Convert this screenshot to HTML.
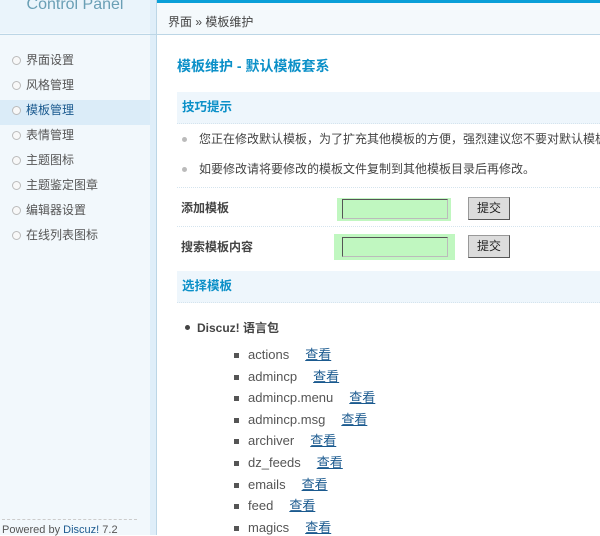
<!DOCTYPE html>
<html><head><meta charset="utf-8"><style>
*{margin:0;padding:0;box-sizing:border-box}
body{width:600px;height:535px;overflow:hidden;background:#fff;font-family:"Liberation Sans","Noto Sans CJK SC",sans-serif;font-size:12px;color:#555;position:relative}
#side{position:absolute;left:0;top:0;width:150px;height:535px;background:#f2f8fc}
#logo{position:absolute;left:0;top:0;width:150px;height:33px;background:#eaf4fb;color:#6a9fb5;font-size:16px;text-align:center;line-height:10px}
#strip{position:absolute;left:150px;top:0;width:6px;height:535px;background:#dfeef9}
#vline{position:absolute;left:156px;top:0;width:1px;height:535px;background:#bcd6e6}
#hline{position:absolute;left:0;top:34px;width:600px;height:1px;background:#bcd6e6}
#top{position:absolute;left:157px;top:0;width:443px;height:3px;background:#0a9fd8}
#crumb{position:absolute;left:157px;top:3px;width:443px;height:31px;background:#f4f9fc;padding:10px 0 0 11px;color:#444}
#menu{position:absolute;left:0;top:50px;width:150px;list-style:none}
#menu li{height:25px;line-height:21px;padding-left:26px;position:relative;font-size:12px;color:#555}
#menu li:before{content:"";position:absolute;left:12px;top:6px;width:7px;height:7px;border-radius:50%;border:1px solid #bbb;background:#f8f8f8}
#menu li.on{background:#dbecf8;color:#1b5a8f}
#pw{position:absolute;left:2px;top:519px;font-size:11px;color:#555;border-top:1px dashed #ccc;width:135px;padding-top:4px}
#pw a{color:#1b5a8f;text-decoration:none}
#main{position:absolute;left:177px;top:35px;width:423px;height:500px;overflow:hidden}
h1{font-size:14px;color:#0b90c8;margin-top:21px;height:36px}
.hd{background:#eef6fc;height:32px;line-height:30px;padding-left:5px;color:#0b90c8;font-weight:bold;font-size:12.5px;border-bottom:1px dotted #d5e4ee}
.tip{height:30px;line-height:28px;padding-left:22px;position:relative;white-space:nowrap;color:#444}
.tip:before{content:"";position:absolute;left:5px;top:12px;width:5px;height:5px;border-radius:50%;background:#bbb}
.row{height:39px;border-top:1px dotted #d5e4ee;position:relative;font-weight:bold;color:#444;line-height:40px;padding-left:4px}
.inp{position:absolute;background:#c0f7c0}
.inp div{position:absolute;width:106px;height:20px;border:1px solid #555;border-right-color:#bbb;border-bottom-color:#bbb;background:#c0f7c0}
.btn{position:absolute;left:291px;width:42px;height:23px;background:#dcdcdc;border:1px solid #999;border-right-color:#555;border-bottom-color:#555;font-weight:normal;color:#222;line-height:21px;text-align:center}
ul.l1{list-style:none;margin-top:16px}
.l1>li{padding-left:20px;position:relative;font-weight:bold;color:#444;height:28px}
.l1>li:before{content:"";position:absolute;left:8px;top:6px;width:5px;height:5px;border-radius:50%;background:#444}
.l2{list-style:none;padding-left:52px;margin-top:-1px}
.l2 li{height:21.6px;line-height:18px;position:relative;padding-left:19px;font-size:13px;color:#555}
.l2 li:before{content:"";position:absolute;left:5px;top:7px;width:5px;height:5px;background:#555}
.l2 a{color:#1b5a8f;text-decoration:underline;margin-left:16px}
</style></head><body>
<div id="side"></div>
<div id="logo">Control Panel</div>
<div id="strip"></div><div id="vline"></div>
<div id="top"></div>
<div id="crumb">界面 » 模板维护</div>
<div id="hline"></div>
<ul id="menu">
<li>界面设置</li><li>风格管理</li><li class="on">模板管理</li><li>表情管理</li><li>主题图标</li><li>主题鉴定图章</li><li>编辑器设置</li><li>在线列表图标</li>
</ul>
<div id="pw">Powered by <a>Discuz!</a> 7.2</div>
<div id="main">
<h1>模板维护 - 默认模板套系</h1>
<div class="hd">技巧提示</div>
<div class="tip" style="margin-top:1px">您正在修改默认模板，为了扩充其他模板的方便，强烈建议您不要对默认模板进行修改</div>
<div class="tip" style="margin-bottom:2px">如要修改请将要修改的模板文件复制到其他模板目录后再修改。</div>
<div class="row">添加模板<div class="inp" style="left:160px;top:10px;width:114px;height:23px"><div style="left:5px;top:1px"></div></div><div class="btn" style="top:9px">提交</div></div>
<div class="row">搜索模板内容<div class="inp" style="left:157px;top:7px;width:121px;height:26px"><div style="left:8px;top:3px"></div></div><div class="btn" style="top:8px">提交</div></div>
<div class="hd" style="margin-top:6px">选择模板</div>
<ul class="l1"><li>Discuz! 语言包</li></ul>
<ul class="l2">
<li>actions<a>查看</a></li><li>admincp<a>查看</a></li><li>admincp.menu<a>查看</a></li><li>admincp.msg<a>查看</a></li><li>archiver<a>查看</a></li><li>dz_feeds<a>查看</a></li><li>emails<a>查看</a></li><li>feed<a>查看</a></li><li>magics<a>查看</a></li>
</ul>
</div>
</body></html>
